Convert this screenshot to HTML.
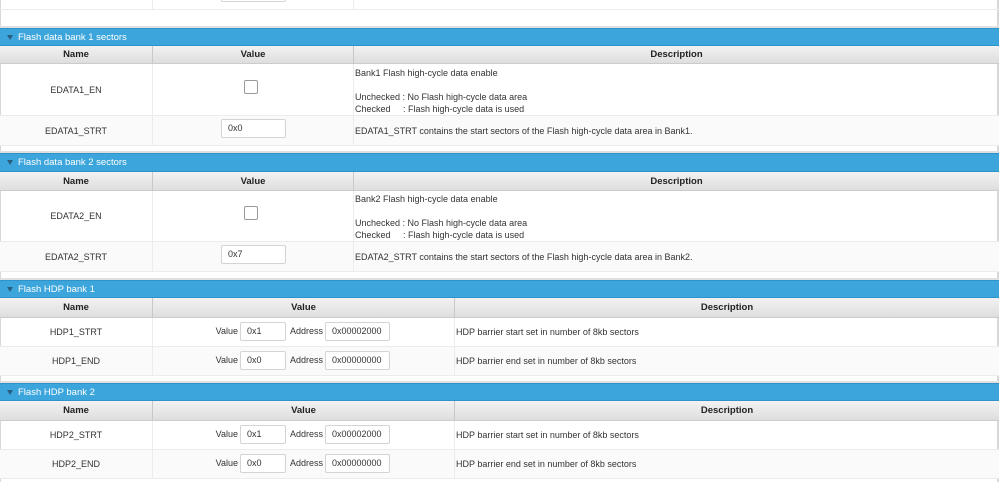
<!DOCTYPE html>
<html><head><meta charset="utf-8"><style>
*{margin:0;padding:0;box-sizing:border-box}
body{width:999px;height:482px;overflow:hidden;background:#fff;font-family:"Liberation Sans",sans-serif;font-size:9px;color:#333;position:relative}
.a{position:absolute}
.bar{position:absolute;left:0;width:999px;background:#3ca6dc;border-top:1px solid #2e93c8;border-bottom:1px solid #2e93c8;color:#fff;font-size:9.5px;line-height:17px;padding-left:18px}
.bar:before{content:"";position:absolute;left:7px;top:6px;border-left:3.5px solid transparent;border-right:3.5px solid transparent;border-top:5px solid #2a5f80}
.hd{position:absolute;left:0;width:999px;background:linear-gradient(#f2f2f2,#dedede);border-bottom:1px solid #ccc;font-weight:bold;color:#222;font-size:9.5px}
.hd div{position:absolute;top:0;height:100%;text-align:center;border-right:1px solid #c8c8c8;display:flex;align-items:center;justify-content:center}
.row{position:absolute;left:0;width:999px;border-bottom:1px solid #ececec}
.row div.c{position:absolute;top:0;height:100%;border-right:1px solid #ececec;display:flex;align-items:center}
.in{position:absolute;height:19px;border:1px solid #d4d4d4;border-radius:2px;background:#fff;padding-left:6px;line-height:17px;font-size:9px}
.cb{position:absolute;width:14px;height:14px;border:1px solid #9a9a9a;border-radius:2px;background:#fff}
.lbl{position:absolute;font-size:9px;line-height:19px;text-align:right}
</style></head><body>
<div class="a" style="left:0;top:0;width:1px;height:482px;background:#d8d8d8"></div>
<div class="a" style="left:997px;top:0;width:2px;height:482px;background:#d8d8d8"></div>
<div class="row" style="top:0;height:10px"><div class="c" style="left:0;width:153px"></div><div class="c" style="left:153px;width:201px"></div></div>
<div class="in" style="left:221px;top:-17px;width:65px"></div>
<div class="a" style="left:0;top:26px;width:999px;height:2px;background:#e0e0e0"></div>

<div class="bar" style="top:28px;height:18px">Flash data bank 1 sectors</div>
<div class="hd" style="top:46px;height:18px"><div style="left:0;width:153px">Name</div><div style="left:153px;width:201px">Value</div><div style="left:354px;width:645px;border-right:none">Description</div></div>
<div class="row" style="top:64px;height:52px"><div class="c" style="left:0;width:153px;justify-content:center">EDATA1_EN</div><div class="c" style="left:153px;width:201px"></div></div>
<div class="cb" style="left:244px;top:80px"></div>
<div class="a" style="left:355px;top:67px;line-height:12px">Bank1 Flash high-cycle data enable<br><br>Unchecked : No Flash high-cycle data area<br>Checked &nbsp;&nbsp;&nbsp; : Flash high-cycle data is used</div>
<div class="row" style="top:116px;height:30px;background:#fafafa"><div class="c" style="left:0;width:153px;justify-content:center">EDATA1_STRT</div><div class="c" style="left:153px;width:201px"></div><div class="c" style="left:355px;width:600px;border:none">EDATA1_STRT contains the start sectors of the Flash high-cycle data area in Bank1.</div></div>
<div class="in" style="left:221px;top:119px;width:65px">0x0</div>
<div class="a" style="left:0;top:151px;width:999px;height:2px;background:#e0e0e0"></div>

<div class="bar" style="top:153px;height:19px">Flash data bank 2 sectors</div>
<div class="hd" style="top:172px;height:19px"><div style="left:0;width:153px">Name</div><div style="left:153px;width:201px">Value</div><div style="left:354px;width:645px;border-right:none">Description</div></div>
<div class="row" style="top:191px;height:51px"><div class="c" style="left:0;width:153px;justify-content:center">EDATA2_EN</div><div class="c" style="left:153px;width:201px"></div></div>
<div class="cb" style="left:244px;top:206px"></div>
<div class="a" style="left:355px;top:193px;line-height:12px">Bank2 Flash high-cycle data enable<br><br>Unchecked : No Flash high-cycle data area<br>Checked &nbsp;&nbsp;&nbsp; : Flash high-cycle data is used</div>
<div class="row" style="top:242px;height:30px;background:#fafafa"><div class="c" style="left:0;width:153px;justify-content:center">EDATA2_STRT</div><div class="c" style="left:153px;width:201px"></div><div class="c" style="left:355px;width:600px;border:none">EDATA2_STRT contains the start sectors of the Flash high-cycle data area in Bank2.</div></div>
<div class="in" style="left:221px;top:245px;width:65px">0x7</div>
<div class="a" style="left:0;top:278px;width:999px;height:2px;background:#e0e0e0"></div>

<div class="bar" style="top:280px;height:18px">Flash HDP bank 1</div>
<div class="hd" style="top:298px;height:20px"><div style="left:0;width:153px">Name</div><div style="left:153px;width:302px">Value</div><div style="left:455px;width:544px;border-right:none">Description</div></div>
<div class="row" style="top:318px;height:29px"><div class="c" style="left:0;width:153px;justify-content:center">HDP1_STRT</div><div class="c" style="left:153px;width:302px"></div><div class="c" style="left:456px;width:500px;border:none">HDP barrier start set in number of 8kb sectors</div></div>
<div class="lbl" style="left:198px;width:40px;top:322px">Value</div><div class="in" style="left:240px;top:322px;width:46px">0x1</div>
<div class="lbl" style="left:283px;width:40px;top:322px">Address</div><div class="in" style="left:325px;top:322px;width:65px">0x00002000</div>
<div class="row" style="top:347px;height:29px;background:#fafafa"><div class="c" style="left:0;width:153px;justify-content:center">HDP1_END</div><div class="c" style="left:153px;width:302px"></div><div class="c" style="left:456px;width:500px;border:none">HDP barrier end set in number of 8kb sectors</div></div>
<div class="lbl" style="left:198px;width:40px;top:351px">Value</div><div class="in" style="left:240px;top:351px;width:46px">0x0</div>
<div class="lbl" style="left:283px;width:40px;top:351px">Address</div><div class="in" style="left:325px;top:351px;width:65px">0x00000000</div>
<div class="a" style="left:0;top:381px;width:999px;height:2px;background:#e0e0e0"></div>

<div class="bar" style="top:383px;height:18px">Flash HDP bank 2</div>
<div class="hd" style="top:401px;height:20px"><div style="left:0;width:153px">Name</div><div style="left:153px;width:302px">Value</div><div style="left:455px;width:544px;border-right:none">Description</div></div>
<div class="row" style="top:421px;height:29px"><div class="c" style="left:0;width:153px;justify-content:center">HDP2_STRT</div><div class="c" style="left:153px;width:302px"></div><div class="c" style="left:456px;width:500px;border:none">HDP barrier start set in number of 8kb sectors</div></div>
<div class="lbl" style="left:198px;width:40px;top:425px">Value</div><div class="in" style="left:240px;top:425px;width:46px">0x1</div>
<div class="lbl" style="left:283px;width:40px;top:425px">Address</div><div class="in" style="left:325px;top:425px;width:65px">0x00002000</div>
<div class="row" style="top:450px;height:29px;background:#fafafa"><div class="c" style="left:0;width:153px;justify-content:center">HDP2_END</div><div class="c" style="left:153px;width:302px"></div><div class="c" style="left:456px;width:500px;border:none">HDP barrier end set in number of 8kb sectors</div></div>
<div class="lbl" style="left:198px;width:40px;top:454px">Value</div><div class="in" style="left:240px;top:454px;width:46px">0x0</div>
<div class="lbl" style="left:283px;width:40px;top:454px">Address</div><div class="in" style="left:325px;top:454px;width:65px">0x00000000</div>
</body></html>
